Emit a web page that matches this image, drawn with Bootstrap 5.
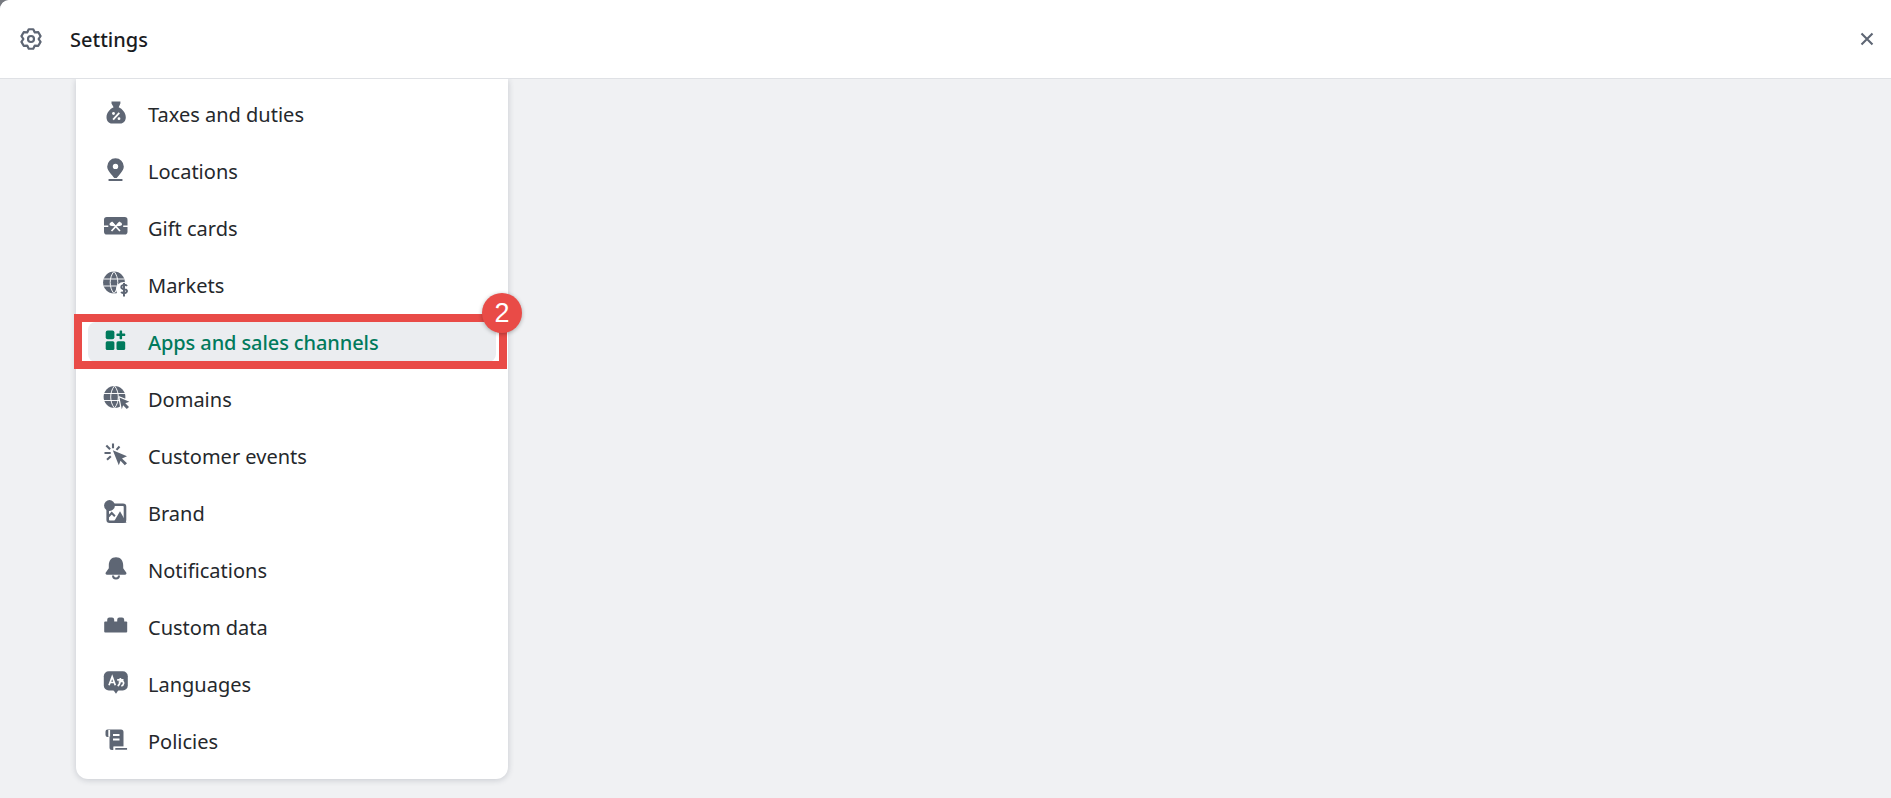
<!DOCTYPE html>
<html lang="en">
<head>
<meta charset="utf-8">
<title>Settings</title>
<link href="https://cdn.jsdelivr.net/npm/bootstrap@5.3.0/dist/css/bootstrap.min.css" rel="stylesheet">
<style>
html,body{height:100%;}
body{background:#777a80;font-family:"Noto Sans","Open Sans",sans-serif;color:#202427;overflow:hidden;}
.shell{height:798px;background:#f0f1f3;border-top-left-radius:9px;overflow:hidden;}
.topbar{height:79px;background:#fff;border-bottom:1px solid #dfe1e5;border-top-left-radius:9px;padding:0 12px 0 19px;position:relative;z-index:2;}
.topbar-title{font-size:20px;font-weight:500;margin-left:27px;padding-top:2px;color:#1a1c1f;}
.gear{width:24px;height:24px;overflow:visible;}
.close-x{width:24px;height:24px;}
.side-panel{margin-left:76px;width:432px;background:#fff;border-radius:0 0 12px 12px;box-shadow:0 1px 6px rgba(30,40,60,.2);padding:15px 0 18px;gap:17px;}
.side-item{height:40px;margin:0 12px;padding-left:15.5px;border-radius:8px;color:#25282c;font-size:20px;text-decoration:none;gap:20.5px;position:relative;}
.side-item span{padding-top:2px;}
.side-item svg{width:24px;height:24px;overflow:visible;fill:#5e6674;flex:none;}
.side-item.is-on{background:#ebedf0;color:#007a5c;font-weight:500;letter-spacing:-.1px;}
.side-item.is-on svg{fill:#007a5c;}
.callout{position:absolute;left:-14px;top:-8px;width:433px;height:55px;border:8px solid #e94b47;pointer-events:none;}
.callout-num{position:absolute;left:394px;top:-29px;width:40px;height:40px;border-radius:50%;background:#e94b47;color:#fff;font:400 27px/40px "Liberation Sans",sans-serif;text-align:center;box-shadow:0 1px 4px rgba(0,0,0,.3);}
</style>
</head>
<body>
<div class="shell d-flex flex-column">
  <header class="topbar d-flex align-items-center">
    <svg class="gear" viewBox="-12 -12 24 24" fill="none" stroke="#5e6674" stroke-width="2.2" stroke-linejoin="round"><path d="M-2.25-9.74 2.25-9.74 3.8-6.58 7.31-6.82 9.56-2.92 7.6 0 9.56 2.92 7.31 6.82 3.8 6.58 2.25 9.74-2.25 9.74-3.8 6.58-7.31 6.82-9.56 2.92-7.6 0-9.56-2.92-7.31-6.82-3.8-6.58Z"/><circle r="3"/></svg>
    <span class="topbar-title">Settings</span>
    <svg class="close-x ms-auto" viewBox="0 0 24 24" fill="none" stroke="#5e6674" stroke-width="2.1"><path d="M6.500 6.500l11 11M17.500 6.500l-11 11"/></svg>
  </header>
  <nav class="side-panel d-flex flex-column">
    <a class="side-item d-flex align-items-center" href="#">
      <svg viewBox="0 0 24 24"><path d="M7.500-.6h8.900v2.200l-1.700 3.600c3.600 1.600 7.100 5.600 7.100 10 0 3.800-2.400 6.300-5.400 6.300H7.900c-3 0-5.400-2.500-5.400-6.300 0-4.400 3.500-8.400 7.100-10L7.500 1.600z"/><path d="M15.300 10.800l-6.200 6.800" stroke="#fff" stroke-width="1.800" fill="none"/><circle cx="9.500" cy="11.500" r="1.400" fill="#fff"/><circle cx="15" cy="16.700" r="1.400" fill="#fff"/></svg>
      <span>Taxes and duties</span>
    </a>
    <a class="side-item d-flex align-items-center" href="#">
      <svg viewBox="0 0 24 24"><path d="M11.500-.8a8.300 8.300 0 0 1 8.300 8.300c0 4.500-5 8.600-7.100 11.600h-2.400C8.200 16 3.200 12 3.200 7.500a8.300 8.300 0 0 1 8.300-8.300z"/><circle cx="11.500" cy="7.400" r="2.700" fill="#fff"/><rect x="4.300" y="20" width="14.400" height="2" rx="1"/></svg>
      <span>Locations</span>
    </a>
    <a class="side-item d-flex align-items-center" href="#">
      <svg viewBox="0 0 24 24"><rect x="0" y="1" width="23.500" height="17.500" rx="2.800"/><path d="M-.5 10.200h4.800M19.200 10.200h4.800" stroke="#fff" stroke-width="1.500" fill="none"/><path d="M7.500 15l8.500-9M16 15L7.500 6" stroke="#fff" stroke-width="1.700" fill="none"/><path d="M5.500 8.300c0-2 2.700-2.600 4-1.300l2.200 3.200-3.900-.2c-1.300 0-2.300-.6-2.300-1.700zM18 8.300c0-2-2.700-2.600-4-1.300l-2.300 3.200 3.900-.2c1.300 0 2.400-.6 2.400-1.700z" fill="#fff"/></svg>
      <span>Gift cards</span>
    </a>
    <a class="side-item d-flex align-items-center" href="#">
      <svg viewBox="0 0 24 24"><circle cx="10" cy="9.500" r="10.900"/><path d="M9.800-1.400C5 4.600 5 14.400 9.800 20.400M10.200-1.400c4.800 6 4.800 15.800 0 21.800M-.5 6h21M-.5 13h21" stroke="#fff" stroke-width=".95" fill="none"/><circle cx="19.500" cy="16.500" r="7.500" fill="#fff"/><path d="M23 13c-.8-1-3-1.300-4.600-.6-1.600.7-1.500 2.700.2 3.300 1.500.5 3.800.4 4.300 1.900.5 1.800-1.700 2.800-3.700 2.500-1-.2-1.600-.6-2-1.200M20 10v13.500" stroke="#5e6674" stroke-width="2" fill="none"/></svg>
      <span>Markets</span>
    </a>
    <a class="side-item is-on d-flex align-items-center" href="#">
      <svg viewBox="0 0 24 24"><rect x="1.700" y=".5" width="8.700" height="8.700" rx="2"/><rect x="1.700" y="11.200" width="8.700" height="8.700" rx="1.500"/><rect x="12.500" y="11.200" width="8.700" height="8.700" rx="1.500"/><rect x="12.500" y="3.600" width="8.700" height="2.500" rx=".6"/><rect x="15.600" y=".5" width="2.500" height="8.700" rx=".6"/></svg>
      <span>Apps and sales channels</span>
      <div class="callout"></div>
      <div class="callout-num">2</div>
    </a>
    <a class="side-item d-flex align-items-center" href="#">
      <svg viewBox="0 0 24 24"><circle cx="10.500" cy="10" r="10.900"/><path d="M10.300-.9c-4.800 6-4.800 15.800 0 21.800M10.700-.9c4.800 6 4.800 15.800 0 21.800M0 6.500h21M0 13.500h21" stroke="#fff" stroke-width=".95" fill="none"/><path d="M15.500 10.500l9.800 4.200-4 1.500 3.700 3.800-2.200 2-3.700-3.800-1.300 4z" stroke="#fff" stroke-width="2.400" stroke-linejoin="round"/><path d="M15.500 10.500l9.800 4.200-4 1.500 3.700 3.800-2.200 2-3.700-3.800-1.300 4z"/></svg>
      <span>Domains</span>
    </a>
    <a class="side-item d-flex align-items-center" href="#">
      <svg viewBox="0 0 24 24"><path d="M8.800 6.200 23 12.300 18 14.600 23 19.200 20.800 21.200 16.500 16.800 14.800 21.200z"/><path d="M9-.4v4.600M2.300 1.500l3.800 3.800M15.500 2.500l-3 3.400M.5 9h6.200M3 15.800l3.800-3.500" stroke="#5e6674" stroke-width="2.100" fill="none"/></svg>
      <span>Customer events</span>
    </a>
    <a class="side-item d-flex align-items-center" href="#">
      <svg viewBox="0 0 24 24"><rect x="3.700" y="3.700" width="17.300" height="17" rx="2" fill="none" stroke="#5e6674" stroke-width="2.600"/><circle cx="5.500" cy="4.500" r="5.400"/><path d="M9.300 21.800l6.700-11.600 6.500 11.600z"/><path d="M4.500 15.500l3.200-3.500 3.200 3.300" fill="none" stroke="#5e6674" stroke-width="2"/></svg>
      <span>Brand</span>
    </a>
    <a class="side-item d-flex align-items-center" href="#">
      <svg viewBox="0 0 24 24"><path d="M12-.8c4.700 0 7.200 3.500 7.200 8.200v2.800l3 4.200c.7 1 0 2.300-1.200 2.300H3c-1.200 0-1.900-1.300-1.200-2.300l3-4.200V7.400C4.800 2.700 7.300-.8 12-.8z"/><path d="M9 17.500a3 3 0 0 0 6 0" fill="none" stroke="#5e6674" stroke-width="2"/></svg>
      <span>Notifications</span>
    </a>
    <a class="side-item d-flex align-items-center" href="#">
      <svg viewBox="0 0 24 24"><rect x=".2" y="6.500" width="23" height="11" rx="1"/><rect x="3.200" y="2.500" width="7" height="7" rx="2.200"/><rect x="13.200" y="2.500" width="7" height="7" rx="2.200"/></svg>
      <span>Custom data</span>
    </a>
    <a class="side-item d-flex align-items-center" href="#">
      <svg viewBox="0 0 24 24"><rect x="-.2" y="-.7" width="24" height="19.200" rx="5"/><path d="M9.300 18h5.200L12 21.700z"/><path d="M5 13.200 8.200 4.700 11.300 13.200M6.100 10.500h4.200M13.200 7.800h6.300M16.400 6c0 4-.8 6.800-2.700 8M14.800 10.500c2.200-1.700 5.200-1.400 4.800.9-.2 1.400-1 2.200-2.300 2.400" fill="none" stroke="#fff" stroke-width="1.700"/></svg>
      <span>Languages</span>
    </a>
    <a class="side-item d-flex align-items-center" href="#">
      <svg viewBox="0 0 24 24"><path d="M3.500.5H17a2.500 2.500 0 0 1 2.500 2.500v14.500H9.300v3.500H8a2.500 2.500 0 0 1-2.500-2.500V8h-2a2 2 0 0 1-2-2V2.500a2 2 0 0 1 2-2z"/><path d="M5.200 1v6.800M9 6h6.500M9 10.500h6.500" stroke="#fff" stroke-width="1.800" fill="none"/><path d="M10.700 18.300h13v2.300a.8.8 0 0 1-.8.8h-11.400c-.8 0-1-.8-.8-1.300z" stroke="#fff" stroke-width="1.200"/></svg>
      <span>Policies</span>
    </a>
  </nav>
</div>
<script src="https://cdn.jsdelivr.net/npm/bootstrap@5.3.0/dist/js/bootstrap.bundle.min.js"></script>
</body>
</html>
